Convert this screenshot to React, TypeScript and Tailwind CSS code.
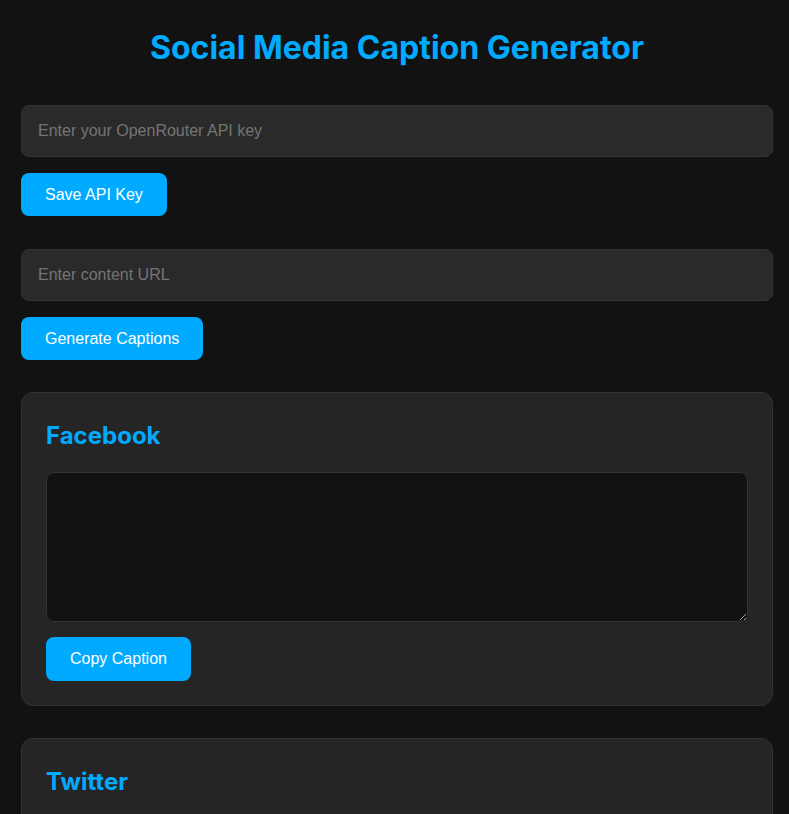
import React from "react";

function Card({ title }: { title: string }) {
  return (
    <div className="rounded-[12px] border border-[#333333] bg-[#252525] px-6 pb-6 pt-6">
      <h2 className="mt-[4px] mb-[22px] text-[24px] font-bold leading-[29px] text-[#00aaff] [font-family:Inter,sans-serif]">
        {title}
      </h2>
      <textarea className="block h-[150px] w-full resize-y rounded-[8px] border border-[#333333] bg-[#121212] p-3 text-[16px] text-white outline-none [font-family:'Liberation_Sans',Arial,sans-serif]" />
      <button className="mt-[15px] rounded-[8px] bg-[#00aaff] px-6 py-3 text-[16px] leading-[20px] text-white [font-family:'Liberation_Sans',Arial,sans-serif]">
        Copy Caption
      </button>
    </div>
  );
}

export default function App() {
  return (
    <div className="min-h-[814px] bg-[#121212] pl-[21px] pr-[16px] pt-[28px] pb-10 [font-family:'Liberation_Sans',Arial,sans-serif]">
      <h1 className="mb-[38px] text-center text-[32px] font-bold leading-[39px] text-[#00aaff] [font-family:Inter,sans-serif]">
        Social Media Caption Generator
      </h1>
      <input
        type="text"
        placeholder="Enter your OpenRouter API key"
        className="block h-[52px] w-full rounded-[8px] border border-[#333333] bg-[#2a2a2a] px-4 text-[16px] text-white outline-none placeholder:text-[#757575]"
      />
      <button className="mt-4 rounded-[8px] bg-[#00aaff] px-6 py-3 text-[16px] leading-[19px] text-white">
        Save API Key
      </button>
      <input
        type="text"
        placeholder="Enter content URL"
        className="mt-[33px] block h-[52px] w-full rounded-[8px] border border-[#333333] bg-[#2a2a2a] px-4 text-[16px] text-white outline-none placeholder:text-[#757575]"
      />
      <button className="mt-4 rounded-[8px] bg-[#00aaff] px-6 py-3 text-[16px] leading-[19px] text-white">
        Generate Captions
      </button>
      <div className="mt-[32px] flex flex-col gap-[32px]">
        <Card title="Facebook" />
        <Card title="Twitter" />
      </div>
    </div>
  );
}
